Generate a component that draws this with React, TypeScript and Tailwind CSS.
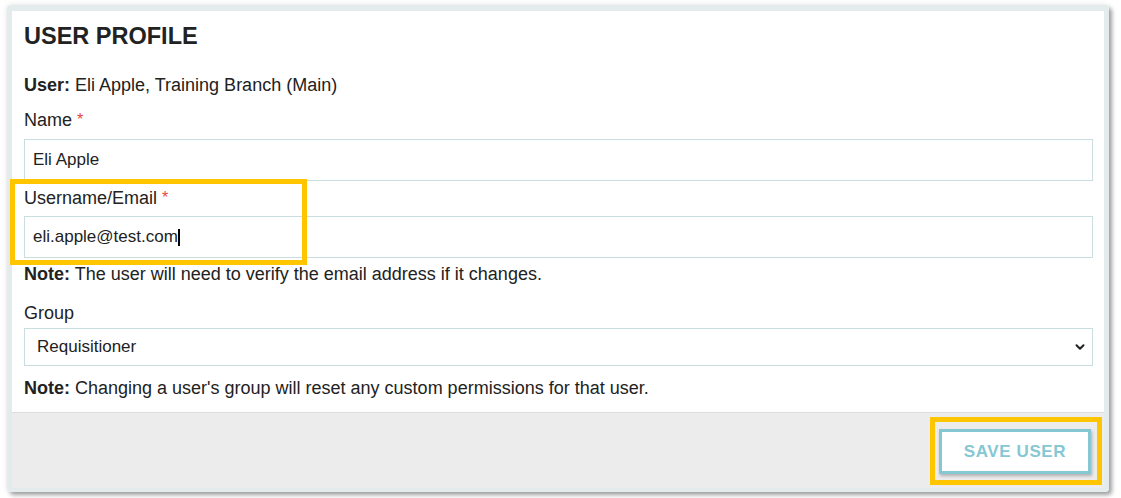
import { ChevronDown } from "lucide-react";

const font = { fontFamily: '"Liberation Sans", Arial, sans-serif' };

function Req() {
  return <span className="text-[#e8453c] text-[16px] leading-none ml-[5px] relative -top-[1px]">*</span>;
}

export default function App() {
  return (
    <div className="relative w-[1121px] h-[498px] bg-white text-[#222]" style={font}>
      <div className="pt-[5px] pl-[7px]">
        <div className="w-[1102px] rounded-[4px] border-[#e4ebed] border-x-[5px] border-t-[6px] border-b-[4px] shadow-[3px_3px_4px_rgba(0,0,0,0.35),0_0_6px_rgba(0,0,0,0.1)]">
          <div className="bg-white pl-[12px] pr-[11px] pt-[12px] pb-[14px] border-b border-[#dcdcdc]">
            <h1 className="h-[26px] text-[23.5px] leading-[26px] font-bold">USER PROFILE</h1>
            <p className="mt-[26px] h-[20px] text-[18px] leading-[20px]">
              <span className="font-bold">User:</span> Eli Apple, Training Branch (Main)
            </p>
            <label className="block mt-[15px] h-[20px] text-[18px] leading-[20px]">
              Name
              <Req />
            </label>
            <div className="mt-[9px] h-[42px] border border-[#c9dde1] flex items-center pl-[8px] text-[17px]">
              Eli Apple
            </div>
            <label className="block mt-[7px] h-[20px] text-[18px] leading-[20px]">
              Username/Email
              <Req />
            </label>
            <div className="mt-[8px] h-[42px] border border-[#c9dde1] flex items-center pl-[8px] text-[17px]">
              eli.apple@test.com
              <span className="inline-block w-[2px] h-[17px] bg-black" />
            </div>
            <p className="mt-[6px] h-[20px] text-[18px] leading-[20px]">
              <span className="font-bold">Note:</span> The user will need to verify the email address if it changes.
            </p>
            <label className="block mt-[19px] h-[20px] text-[18px] leading-[20px]">Group</label>
            <div className="mt-[5px] h-[38px] border border-[#c9dde1] flex items-center justify-between pl-[12px] pr-[5px] text-[17px]">
              <span>Requisitioner</span>
              <ChevronDown size={14} strokeWidth={3.5} className="text-[#222]" />
            </div>
            <p className="mt-[12px] h-[20px] text-[18px] leading-[20px]">
              <span className="font-bold">Note:</span> Changing a user's group will reset any custom permissions for that user.
            </p>
          </div>
          <div className="bg-[#ececec] h-[75px] flex items-center justify-end pr-[13px] pt-[2px]">
            <button
              type="button"
              className="w-[152px] h-[45px] bg-white border-[3px] border-[#85c7d2] text-[#85c7d2] font-bold text-[17px] tracking-[0.6px] shadow-[1px_2px_3px_rgba(0,0,0,0.25)]"
            >
              SAVE USER
            </button>
          </div>
        </div>
      </div>
      <div className="absolute left-[10px] top-[179px] w-[297px] h-[86px] border-[5px] border-[#ffc600]" />
      <div className="absolute left-[930px] top-[417px] w-[172px] h-[68px] border-[5px] border-[#ffc600]" />
    </div>
  );
}
